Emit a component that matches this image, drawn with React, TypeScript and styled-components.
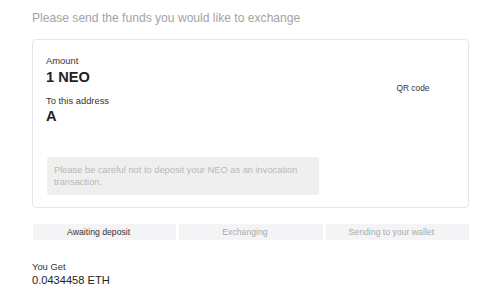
import React from "react";
import styled, { createGlobalStyle } from "styled-components";

const GlobalStyle = createGlobalStyle`
  html, body {
    margin: 0;
    padding: 0;
    background: #fff;
  }
  body {
    font-family: "Liberation Sans", Arial, sans-serif;
    color: #333;
  }
`;

const steps = [
  { label: "Awaiting deposit", active: true },
  { label: "Exchanging", active: false },
  { label: "Sending to your wallet", active: false },
];

const App = () => {
  return (
    <>
      <GlobalStyle />
      <Page>
        <Title>Please send the funds you would like to exchange</Title>
        <Card>
          <Details>
            <Label>Amount</Label>
            <Value>1 NEO</Value>
            <Label $gap>To this address</Label>
            <Value>A</Value>
            <Warning>
              Please be careful not to deposit your NEO as an invocation
              transaction.
            </Warning>
          </Details>
          <QrBox>QR code</QrBox>
        </Card>
        <Steps>
          {steps.map((s) => (
            <Step key={s.label} $active={s.active}>
              {s.label}
            </Step>
          ))}
        </Steps>
        <Result>
          <Label>You Get</Label>
          <Amount>0.0434458 ETH</Amount>
        </Result>
      </Page>
    </>
  );
};

export default App;

const Page = styled.div`
  width: 437px;
  margin-left: 32px;
  padding-top: 11px;
`;

const Title = styled.div`
  font-size: 12.1px;
  line-height: 14px;
  color: #a3a3a3;
`;

const Card = styled.div`
  margin-top: 14px;
  height: 169px;
  box-sizing: border-box;
  border: 1px solid #e6e6e6;
  border-radius: 4px;
  display: flex;
`;

const Details = styled.div`
  flex: 1;
  padding: 15px 0 0 13px;
`;

const Label = styled.div<{ $gap?: boolean }>`
  font-size: 9.4px;
  line-height: 11px;
  color: #333;
  margin-top: ${(p) => (p.$gap ? "9px" : "0")};
`;

const Value = styled.div`
  margin-top: 2.5px;
  font-size: 14.6px;
  line-height: 17px;
  font-weight: 700;
  color: #222;
`;

const Warning = styled.div`
  margin-top: 31.5px;
  margin-left: 1px;
  width: 272px;
  box-sizing: border-box;
  padding: 7.5px 7px 6.5px;
  background: #efefef;
  border-radius: 3px;
  font-size: 9.3px;
  line-height: 12.4px;
  color: #b8b8b8;
`;

const QrBox = styled.div`
  width: 110px;
  padding-top: 43px;
  text-align: center;
  font-size: 8.4px;
  line-height: 11px;
  color: #333;
`;

const Steps = styled.div`
  margin-top: 16px;
  padding-left: 1px;
  display: grid;
  grid-template-columns: repeat(3, 1fr);
  gap: 3px;
`;

const Step = styled.div<{ $active: boolean }>`
  height: 16px;
  padding-right: 12px;
  background: #f4f4f6;
  text-align: center;
  font-size: 8.7px;
  line-height: 16px;
  color: ${(p) => (p.$active ? "#333" : "#aaa")};
`;

const Result = styled.div`
  margin-top: 21px;
`;

const Amount = styled.div`
  margin-top: 2px;
  font-size: 11.1px;
  line-height: 13px;
  color: #222;
`;
